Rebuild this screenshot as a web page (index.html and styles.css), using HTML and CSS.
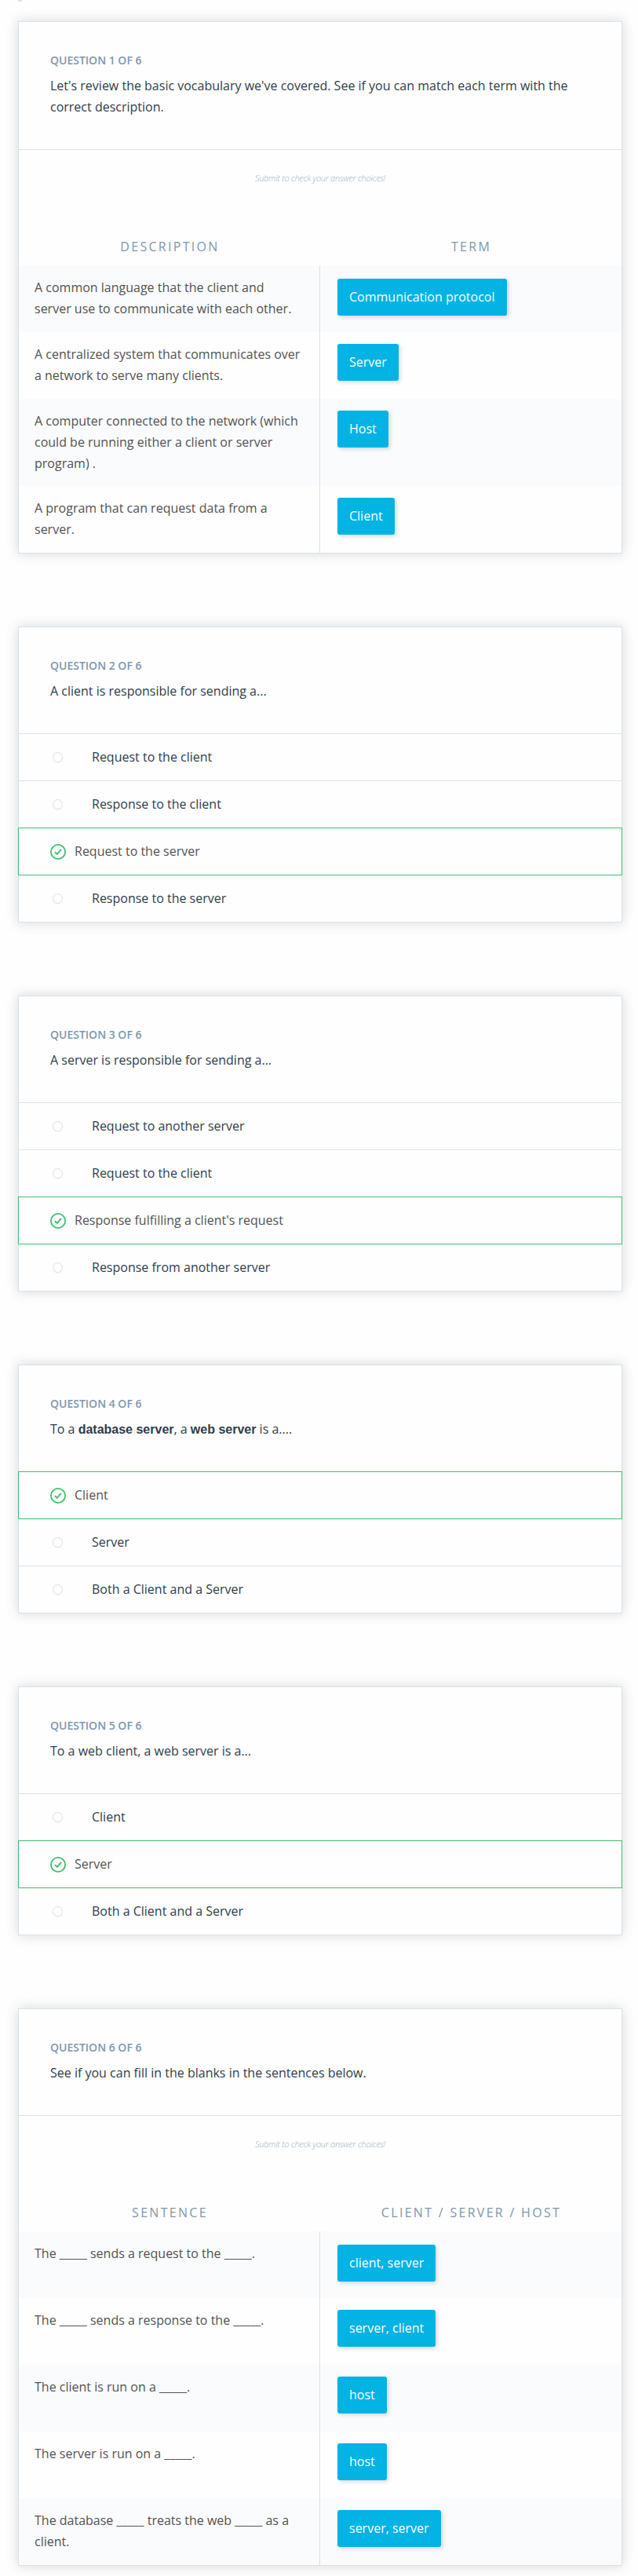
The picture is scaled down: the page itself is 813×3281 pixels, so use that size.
FILE: index.html
```html
<!DOCTYPE html>
<html lang="en">
<head>
<meta charset="utf-8">
<title>Client and Server Quiz</title>
<link rel="stylesheet" href="styles.css">
</head>
<body>
<svg class="defs" width="0" height="0" aria-hidden="true">
  <symbol id="check" viewBox="0 0 20 20">
    <circle cx="10" cy="10" r="9.1" fill="none" stroke="currentColor" stroke-width="1.8"/>
    <path d="M5.9 10.3l2.9 2.5 5.2-6" fill="none" stroke="currentColor" stroke-width="1.9"/>
  </symbol>
</svg>
<div class="rule-end"></div>
<main class="quiz">
  <section class="card">
    <header class="question">
      <h2 class="label">QUESTION 1 OF 6</h2>
      <p class="prompt">Let's review the basic vocabulary we've covered. See if you can match each term with the correct description.</p>
    </header>
    <p class="hint">Submit to check your answer choices!</p>
    <div class="columns"><span>DESCRIPTION</span><span>TERM</span></div>
    <div class="match">
      <div class="row"><p class="desc">A common language that the client and server use to communicate with each other.</p><div class="answer"><span class="chip">Communication protocol</span></div></div>
      <div class="row"><p class="desc">A centralized system that communicates over a network to serve many clients.</p><div class="answer"><span class="chip">Server</span></div></div>
      <div class="row tall"><p class="desc">A computer connected to the network (which could be running either a client or server program) .</p><div class="answer"><span class="chip">Host</span></div></div>
      <div class="row"><p class="desc">A program that can request data from a server.</p><div class="answer"><span class="chip">Client</span></div></div>
    </div>
  </section>

  <section class="card">
    <header class="question">
      <h2 class="label">QUESTION 2 OF 6</h2>
      <p class="prompt">A client is responsible for sending a...</p>
    </header>
    <ul class="options">
      <li class="option"><i class="radio"></i>Request to the client</li>
      <li class="option"><i class="radio"></i>Response to the client</li>
      <li class="option correct"><svg class="icon"><use href="#check"/></svg>Request to the server</li>
      <li class="option"><i class="radio"></i>Response to the server</li>
    </ul>
  </section>

  <section class="card">
    <header class="question">
      <h2 class="label">QUESTION 3 OF 6</h2>
      <p class="prompt">A server is responsible for sending a...</p>
    </header>
    <ul class="options">
      <li class="option"><i class="radio"></i>Request to another server</li>
      <li class="option"><i class="radio"></i>Request to the client</li>
      <li class="option correct"><svg class="icon"><use href="#check"/></svg>Response fulfilling a client's request</li>
      <li class="option"><i class="radio"></i>Response from another server</li>
    </ul>
  </section>

  <section class="card">
    <header class="question">
      <h2 class="label">QUESTION 4 OF 6</h2>
      <p class="prompt">To a <strong>database server</strong>, a <strong>web server</strong> is a....</p>
    </header>
    <ul class="options">
      <li class="option correct"><svg class="icon"><use href="#check"/></svg>Client</li>
      <li class="option"><i class="radio"></i>Server</li>
      <li class="option"><i class="radio"></i>Both a Client and a Server</li>
    </ul>
  </section>

  <section class="card">
    <header class="question">
      <h2 class="label">QUESTION 5 OF 6</h2>
      <p class="prompt">To a web client, a web server is a...</p>
    </header>
    <ul class="options">
      <li class="option"><i class="radio"></i>Client</li>
      <li class="option correct"><svg class="icon"><use href="#check"/></svg>Server</li>
      <li class="option"><i class="radio"></i>Both a Client and a Server</li>
    </ul>
  </section>

  <section class="card">
    <header class="question">
      <h2 class="label">QUESTION 6 OF 6</h2>
      <p class="prompt">See if you can fill in the blanks in the sentences below.</p>
    </header>
    <p class="hint">Submit to check your answer choices!</p>
    <div class="columns"><span>SENTENCE</span><span>CLIENT / SERVER / HOST</span></div>
    <div class="match">
      <div class="row"><p class="desc">The _____ sends a request to the _____.</p><div class="answer"><span class="chip">client, server</span></div></div>
      <div class="row"><p class="desc">The _____ sends a response to the _____.</p><div class="answer"><span class="chip">server, client</span></div></div>
      <div class="row"><p class="desc">The client is run on a _____.</p><div class="answer"><span class="chip">host</span></div></div>
      <div class="row"><p class="desc">The server is run on a _____.</p><div class="answer"><span class="chip">host</span></div></div>
      <div class="row"><p class="desc">The database _____ treats the web _____ as a client.</p><div class="answer"><span class="chip">server, server</span></div></div>
    </div>
  </section>
</main>
</body>
</html>
```
FILE: styles.css
```css
* { box-sizing: border-box; }

body {
  margin: 0;
  background: #fefefe;
  color: #2e3d49;
  font: 16px/27px "Open Sans", "Liberation Sans", sans-serif;
}

h2, p, ul { margin: 0; padding: 0; }

.defs { position: absolute; }

.rule-end {
  width: 5px;
  height: 2px;
  margin-left: 23px;
  background: #dbe2e8;
}

.quiz {
  display: flex;
  flex-direction: column;
  gap: 93px;
  width: 770px;
  margin: 25px 0 13px 23px;
}

.card {
  border: 1px solid #dbe2e8;
  background: #fefefe;
  box-shadow: 0 0 15px rgba(46, 61, 73, 0.2);
}

.question { padding: 40px; }

.label {
  margin-bottom: 11px;
  color: #7d97ad;
  font-size: 14px;
  font-weight: 600;
  line-height: 17px;
}

.prompt strong {
  font-family: "Liberation Sans", sans-serif;
  font-weight: 700;
}

.options { list-style: none; }

.option {
  display: flex;
  align-items: center;
  height: 60px;
  padding: 0 40px 0 43px;
  border-top: 1px solid #dbe2e8;
}

.radio {
  width: 13px;
  height: 13px;
  margin-right: 37px;
  border: 1px solid #dbe2e8;
  border-radius: 50%;
  box-shadow: 0 1px 1px rgba(46, 61, 73, 0.06);
}

.option.correct {
  height: 61px;
  margin: 0 -1px -1px;
  padding-left: 40px;
  border: 1px solid #3dc06c;
  color: #525252;
}

.option.correct + .option { border-top-color: transparent; }

.icon {
  width: 20px;
  height: 20px;
  margin: 1px 11px 0 0;
  color: #3dc06c;
}

.hint {
  height: 111px;
  padding-top: 22px;
  border-top: 1px solid #dbe2e8;
  color: #9fb3c4;
  font-size: 11px;
  font-style: italic;
  font-weight: 300;
  letter-spacing: -0.3px;
  text-align: center;
}

.columns {
  display: grid;
  grid-template-columns: 1fr 1fr;
  height: 37px;
  color: #7d97ad;
  font-weight: 500;
  letter-spacing: 2.3px;
  text-align: center;
}

.columns span { padding-left: 1px; }

.row {
  display: grid;
  grid-template-columns: 384px 1fr;
  height: 85px;
}

.row.tall { height: 111px; }
.row:nth-child(odd) { background: #fafbfc; }

.desc {
  padding: 15px 22px 0 20px;
  border-right: 1px solid #dbe2e8;
  color: #525252;
}

.answer { padding: 15px 22px; }
.row:first-child .answer { padding-top: 17px; }

.chip {
  display: inline-block;
  padding: 10px 15px;
  border-radius: 3px;
  background: #02b3e4;
  box-shadow: 2px 2px 5px rgba(46, 61, 73, 0.2);
  color: #fff;
}
```
